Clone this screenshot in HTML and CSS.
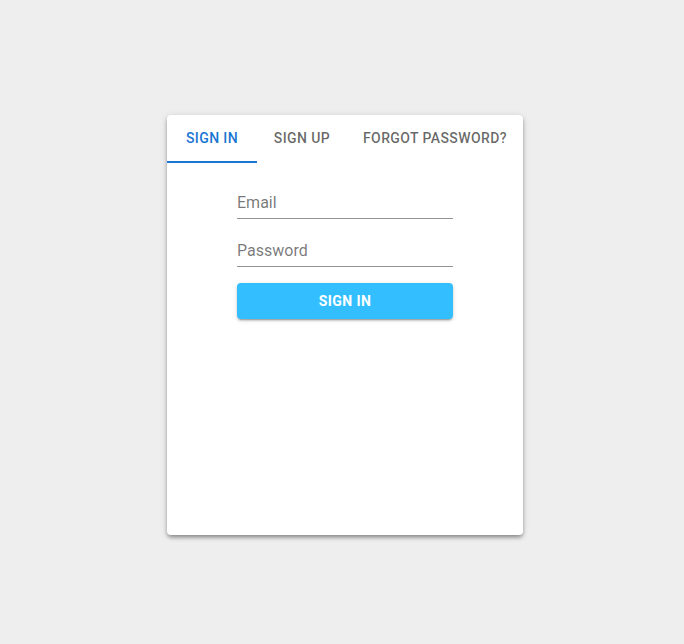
FILE: index.html
```
<!DOCTYPE html>
<html>
<head>
<meta charset="utf-8">
<link rel="stylesheet" href="styles.css">
</head>
<body>
<div class="page">
  <div class="card">
    <div class="tabs">
      <div class="tab active">Sign in</div>
      <div class="tab">Sign up</div>
      <div class="tab">Forgot password?</div>
    </div>
    <form class="form">
      <div class="field"><span class="label">Email</span></div>
      <div class="field"><span class="label">Password</span></div>
      <button type="button" class="btn">Sign in</button>
    </form>
  </div>
</div>
</body>
</html>
```
FILE: styles.css
```
html, body {
  margin: 0;
  padding: 0;
  background: #eeeeee;
  font-family: Roboto, "Liberation Sans", sans-serif;
}
.page {
  padding: 115px 0 40px 167px;
}
.card {
  width: 356px;
  height: 420px;
  background: #fff;
  border-radius: 4px;
  box-shadow: 0px 3px 4px -1px rgba(0,0,0,0.35), 0px 2px 5px 0px rgba(0,0,0,0.12), 0px 1px 8px 0px rgba(0,0,0,0.08);
}
.tabs {
  display: flex;
  height: 48px;
}
.tab {
  min-width: 90px;
  padding: 12px 16px;
  box-sizing: border-box;
  display: flex;
  align-items: center;
  justify-content: center;
  font-size: 14px;
  font-weight: 500;
  letter-spacing: 0.02857em;
  text-transform: uppercase;
  color: rgba(0,0,0,0.6);
  border-bottom: 2px solid transparent;
}
.tab.active {
  color: #1976d2;
  border-bottom-color: #1976d2;
}
.form {
  display: flex;
  flex-direction: column;
  gap: 16px;
  width: 216px;
  margin: 24px auto 0;
}
.field {
  height: 32px;
  box-sizing: border-box;
  padding: 6px 0 7px;
  border-bottom: 1px solid rgba(0,0,0,0.42);
  font-size: 16px;
  line-height: 19px;
  color: rgba(0,0,0,0.54);
}
.btn {
  height: 36px;
  border: none;
  border-radius: 4px;
  background: #33bfff;
  color: #fff;
  font-family: Roboto, "Liberation Sans", sans-serif;
  font-size: 14px;
  font-weight: 700;
  letter-spacing: 0.02857em;
  text-transform: uppercase;
  box-shadow: 0px 3px 1px -2px rgba(0,0,0,0.2), 0px 2px 2px 0px rgba(0,0,0,0.14), 0px 1px 5px 0px rgba(0,0,0,0.12);
}
```
